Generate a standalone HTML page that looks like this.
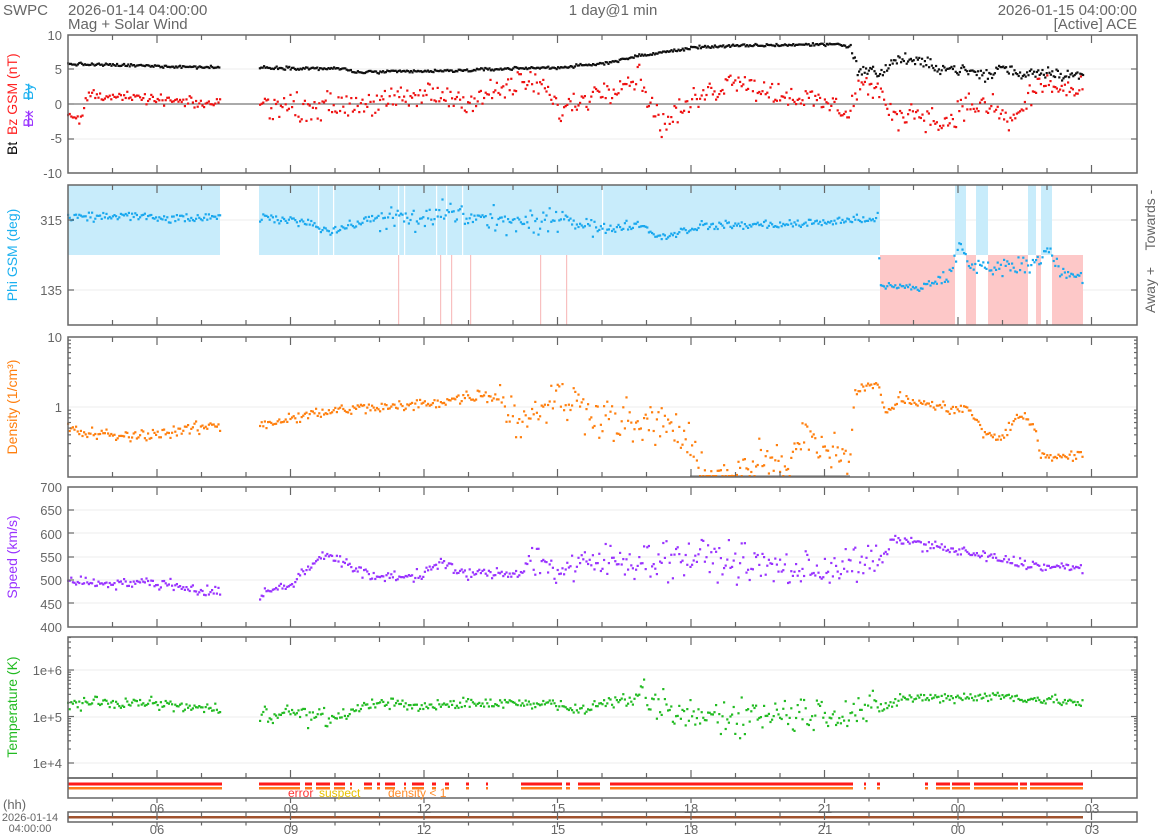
<!DOCTYPE html>
<html><head><meta charset="utf-8"><style>
html,body{margin:0;padding:0;background:#fff;}
svg{display:block;font-family:"Liberation Sans",sans-serif;}
</style></head><body>
<svg id="s" width="1158" height="838" viewBox="0 0 1158 838" xmlns="http://www.w3.org/2000/svg">
<g fill="#666" font-size="15">
<text x="3" y="15">SWPC</text>
<text x="68" y="15">2026-01-14 04:00:00</text>
<text x="68" y="29">Mag + Solar Wind</text>
<text x="613" y="15" text-anchor="middle">1 day@1 min</text>
<text x="1137" y="15" text-anchor="end">2026-01-15 04:00:00</text>
<text x="1137" y="29" text-anchor="end">[Active] ACE</text>
</g>
<g id="bg"></g>
<g id="pts"></g>
<g id="axes" fill="none" stroke="#666" stroke-width="1.5"></g>
<g fill="#666" font-size="13" text-anchor="end">
<text x="62" y="40">10</text><text x="62" y="74">5</text><text x="62" y="109">0</text><text x="62" y="143">-5</text><text x="62" y="178">-10</text>
<text x="62" y="225">315</text><text x="62" y="295">135</text>
<text x="62" y="342">10</text><text x="62" y="412">1</text>
<text x="62" y="492">700</text><text x="62" y="515">650</text><text x="62" y="539">600</text><text x="62" y="562">550</text><text x="62" y="585">500</text><text x="62" y="609">450</text><text x="62" y="632">400</text>
<text x="62" y="675">1e+6</text><text x="62" y="722">1e+5</text><text x="62" y="768">1e+4</text>
</g>
<g fill="#666" font-size="13" text-anchor="middle">
<text x="157" y="813">06</text><text x="291" y="813">09</text><text x="424" y="813">12</text><text x="558" y="813">15</text><text x="691" y="813">18</text><text x="825" y="813">21</text><text x="958" y="813">00</text><text x="1092" y="813">03</text>
<text x="157" y="834">06</text><text x="291" y="834">09</text><text x="424" y="834">12</text><text x="558" y="834">15</text><text x="691" y="834">18</text><text x="825" y="834">21</text><text x="958" y="834">00</text><text x="1092" y="834">03</text>
</g>
<g fill="#666" font-size="13"><text x="3" y="809">(hh)</text></g>
<g fill="#666" font-size="11" text-anchor="middle"><text x="30" y="821">2026-01-14</text><text x="30" y="832">04:00:00</text></g>
<g font-size="12"><text x="288" y="797" fill="#ff3333">error</text><text x="319" y="797" fill="#e8c000">suspect</text><text x="388" y="797" fill="#ff8c2a">density &lt; 1</text></g>
<g font-size="14">
<text transform="translate(17,155) rotate(-90)" fill="#000">Bt</text>
<text transform="translate(17,135) rotate(-90)" fill="#ff2222">Bz GSM (nT)</text>
<text transform="translate(33,127) rotate(-90)" fill="#9933ff" text-decoration="line-through">Bx</text>
<text transform="translate(33,100) rotate(-90)" fill="#1ab0f0" text-decoration="line-through">By</text>
<text transform="translate(17,255) rotate(-90)" fill="#1ab0f0" text-anchor="middle">Phi GSM (deg)</text>
<text transform="translate(17,407) rotate(-90)" fill="#ff7f0e" text-anchor="middle">Density (1/cm³)</text>
<text transform="translate(17,557) rotate(-90)" fill="#9933ff" text-anchor="middle">Speed (km/s)</text>
<text transform="translate(17,707) rotate(-90)" fill="#22bb22" text-anchor="middle">Temperature (K)</text>
<text transform="translate(1155,220) rotate(-90)" fill="#666" text-anchor="middle">Towards -</text>
<text transform="translate(1155,290) rotate(-90)" fill="#666" text-anchor="middle">Away +</text>
</g>
</svg>
<script>
(function(){
var NS="http://www.w3.org/2000/svg";
function el(p,t,a){var e=document.createElementNS(NS,t);for(var k in a)e.setAttribute(k,a[k]);p.appendChild(e);return e;}
var s=1234567;function r(){s=(s*1103515245+12345)%2147483648;return s/2147483648;}
function g(){return (r()+r()+r()-1.5)*1.4;}
function interp(k,x){for(var i=0;i<k.length-1;i++){if(x<=k[i+1][0]){var a=k[i],b=k[i+1];return a[1]+(b[1]-a[1])*(x-a[0])/(b[0]-a[0]);}}return k[k.length-1][1];}
var bg=document.getElementById('bg'),pts=document.getElementById('pts'),ax=document.getElementById('axes');
var P=[[35,173],[185,325],[337,477],[487,627],[637,778]];
[69,139,220,290,407,510,533,557,580,603,670,717,763].forEach(function(y){el(bg,'line',{x1:68,x2:1137,y1:y,y2:y,stroke:'#eee','stroke-width':1});});
el(bg,'line',{x1:68,x2:1137,y1:104,y2:104,stroke:'#555','stroke-width':1});
function rect(x1,x2,y1,y2,c){el(bg,'rect',{x:x1,y:y1,width:x2-x1,height:y2-y1,fill:c});}
var B='#c8ecfb',R='#fdc8c8';
rect(68,220,185,255,B);rect(259,880,185,255,B);
rect(880,1083,255,325,R);
[[955,966],[976,988],[1028,1036],[1041,1052]].forEach(function(a){rect(a[0],a[1],185,255,B);rect(a[0],a[1],255,325,'#fff');});
[398,440,451,470,540,566].forEach(function(x){rect(x,x+1.2,255,325,'#f8c0c0');});
[318,333,398,404,436,446,462,602].forEach(function(x){rect(x,x+1.2,185,255,'#fff');});
el(bg,'line',{x1:690,x2:850,y1:476,y2:476,stroke:'#888','stroke-width':1.2});
function series(keys,noise,yf,col,extra,step){
 for(var x=68;x<=1083;x+=(step||1.4)){ if(x>220&&x<259)continue;
  var v=interp(keys,x);var n=noise;if(extra)n=extra(x,n);
  var val=v+g()*n; var y=yf(val); if(y<0)continue;
  el(pts,'rect',{x:(x-1).toFixed(1),y:(y-1).toFixed(1),width:2.2,height:2.2,fill:col});}
}
series([[68,5.8],[220,5.3],[259,5.3],[345,5.1],[355,4.6],[450,4.8],[520,5.2],[560,5.3],[600,5.8],[640,7],[700,8.3],[760,8.5],[840,8.7],[850,8.2],[858,5],[880,4.5],[900,6.7],[940,5.3],[960,5],[990,4],[1000,5.5],[1020,4.3],[1040,4.8],[1083,4]],0.15,function(v){return 104-v*6.9;},'#111',function(x,n){return x>850?0.6:n;});
series([[68,-1.5],[80,-2.5],[88,1.5],[120,1],[170,0.5],[200,0],[220,0.2],[259,0.2],[300,-0.5],[350,0],[400,0.5],[430,1.5],[470,0.5],[520,3],[540,3],[560,-1],[600,2],[640,4],[660,-3],[700,1],[740,4],[760,2],[800,1],[850,-1],[860,3],[880,2],[890,-2],[920,-1],[940,-3],[970,0],[1000,-1],[1010,-3],[1040,3],[1083,1.5]],1.3,function(v){return 104-v*6.9;},'#ee1111',function(x,n){return x<260?0.5:n;},1.6);
series([[68,320],[130,327],[160,318],[220,320],[259,322],[310,310],[330,285],[350,300],[380,325],[420,310],[450,340],[470,320],[500,315],[540,300],[560,330],[600,290],[640,305],[660,270],[700,300],[800,305],[878,320],[880,145],[920,140],[950,175],[960,250],[970,195],[1020,197],[1040,215],[1050,250],[1060,175],[1083,165]],8,function(v){return 220+(315-v)*0.3889;},'#1aa8ee',function(x,n){return (x>380&&x<600)?22:(x>940?14:n);},1.6);
function L(v){return Math.log10(v);}
series([[68,L(0.5)],[85,L(0.42)],[130,L(0.38)],[175,L(0.45)],[220,L(0.55)],[259,L(0.55)],[290,L(0.7)],[350,L(0.95)],[400,L(1)],[440,L(1.2)],[480,L(1.5)],[500,L(1.4)],[520,L(0.6)],[550,L(1.3)],[570,L(1.2)],[600,L(0.8)],[640,L(0.5)],[670,L(0.6)],[690,L(0.25)],[700,L(0.11)],[750,L(0.11)],[760,L(0.2)],[790,L(0.11)],[800,L(0.5)],[820,L(0.3)],[850,L(0.2)],[855,L(1.8)],[880,L(2)],[885,L(0.8)],[900,L(1.3)],[940,L(1)],[970,L(0.9)],[985,L(0.4)],[1000,L(0.35)],[1020,L(0.8)],[1035,L(0.5)],[1040,L(0.2)],[1083,L(0.2)]],0.06,function(v){return Math.min(476,407-70*v);},'#ff7f0e',function(x,n){return (x>500&&x<700)?0.22:(x>700&&x<850?0.18:n);},1.6);
series([[68,505],[85,495],[150,495],[175,490],[200,478],[220,475],[259,470],[290,490],[325,560],[350,530],[370,508],[420,510],[440,540],[460,515],[520,515],[530,550],[560,520],[600,540],[700,550],[800,520],[880,540],[895,590],[940,570],[1000,545],[1040,530],[1083,525]],8,function(v){return 487+(700-v)*0.4667;},'#9933ff',function(x,n){return (x>530&&x<880)?28:n;},1.6);
series([[68,5.3],[150,5.3],[220,5.15],[259,5.1],[300,5.08],[330,4.95],[380,5.34],[420,5.2],[460,5.3],[560,5.3],[580,5.1],[600,5.3],[640,5.4],[680,5.0],[880,5.15],[900,5.4],[1000,5.45],[1083,5.3]],0.08,function(v){return 717-46.5*(v-5);},'#22bb22',function(x,n){return (x>640&&x<880)?0.28:(x>259&&x<330?0.15:n);},1.6);
function seg(a,b,y,c,h){el(pts,'rect',{x:a,y:y,width:b-a,height:h,fill:c});}
var red=[[68,222],[259,300],[305,312],[316,330],[334,345],[350,352],[364,372],[377,380],[385,395],[404,406],[412,424],[432,436],[445,449],[466,469],[486,488],[521,562],[566,570],[578,600],[610,853],[864,866],[877,880],[925,928],[936,950],[952,970],[974,1018],[1020,1027],[1030,1083]];
red.forEach(function(a){seg(a[0],a[1],782.5,'#ff1a1a',3);});
red.forEach(function(a){seg(a[0],a[1],787,'#ff7a1a',2.5);});
seg(68,1083,816,'#a0522d',2.5);
P.forEach(function(p){el(ax,'rect',{x:68,y:p[0],width:1069,height:p[1]-p[0]});});
el(ax,'rect',{x:68,y:778,width:1069,height:20});
el(ax,'rect',{x:68,y:812,width:1069,height:10});
var frames=P.concat([[812,822]]);
for(var h=1;h<=23;h++){var x=68+44.5*h;var Ln=(h%3==2)?8:5;
 frames.forEach(function(p,i){el(ax,'line',{x1:x,x2:x,y1:p[0],y2:p[0]+Ln,'stroke-width':1.2});if(i<5)el(ax,'line',{x1:x,x2:x,y1:p[1],y2:p[1]-Ln,'stroke-width':1.2});});
 el(ax,'line',{x1:x,x2:x,y1:798,y2:798+Ln/2+1,'stroke-width':1.2});el(ax,'line',{x1:x,x2:x,y1:822,y2:822+Ln/2+1,'stroke-width':1.2});}
function yt(y,l){el(ax,'line',{x1:68,x2:68+l,y1:y,y2:y,'stroke-width':1.2});el(ax,'line',{x1:1137,x2:1137-l,y1:y,y2:y,'stroke-width':1.2});}
[69,104,139].forEach(function(y){yt(y,6);});[220,290].forEach(function(y){yt(y,6);});
[510,533,557,580,603].forEach(function(y){yt(y,6);});
for(var d=0;d<2;d++)for(var m=2;m<10;m++)yt(337+d*70+70-70*Math.log10(m),3);
for(var d=-1;d<2;d++)for(var m=1;m<10;m++){var y=670+46.5*d+46.5-46.5*Math.log10(m);if(y>637&&y<778)yt(y,m==1?6:3);}
})();
</script>
</body></html>
